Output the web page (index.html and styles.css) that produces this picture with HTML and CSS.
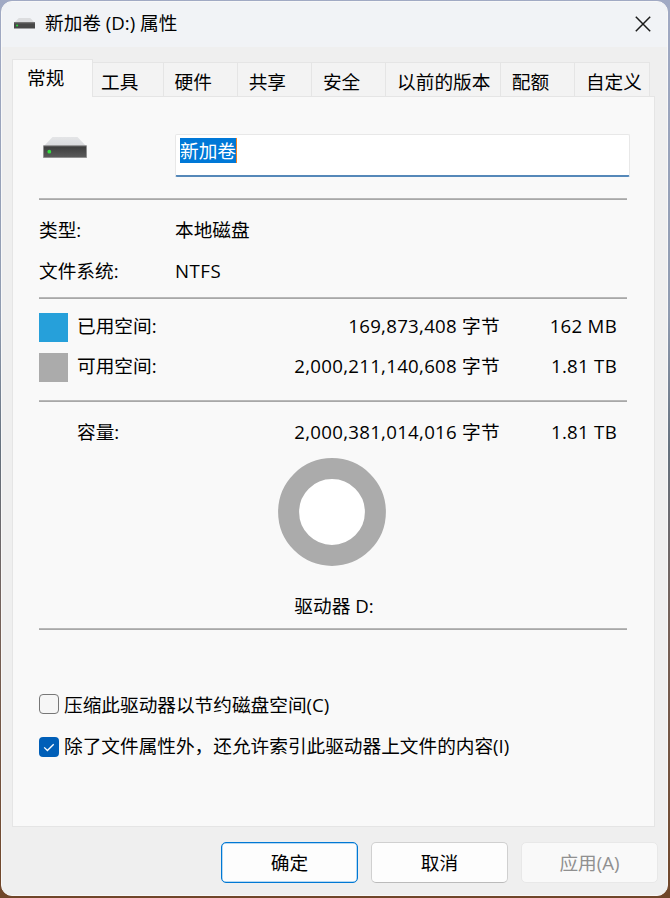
FILE: index.html
```
<!DOCTYPE html>
<html lang="zh-CN">
<head>
<meta charset="utf-8">
<title>新加卷 (D:) 属性</title>
<link rel="stylesheet" href="styles.css">
</head>
<body>
<main class="window">
  <header class="titlebar">
    <svg class="title-icon" viewBox="0 0 44 22" preserveAspectRatio="none"><path d="M10 0h24l9 9H1z" fill="#dcdddf"/><path d="M0 8.5h44V21H0z" fill="#484848"/><path d="M0 8.5h44v2H0z" fill="#777"/><circle cx="6.5" cy="15" r="2.2" fill="#28d83c"/></svg>
    <h1 class="title">新加卷 (D:) 属性</h1>
    <svg class="close" viewBox="0 0 16 16"><path d="M.8.8l14.4 14.4M15.2.8L.8 15.2" stroke="#1b1b1b" stroke-width="1.5" fill="none"/></svg>
  </header>
  <nav class="tabs">
    <div class="tab tab-active">常规</div>
    <div class="tab tab-w70">工具</div>
    <div class="tab">硬件</div>
    <div class="tab">共享</div>
    <div class="tab">安全</div>
    <div class="tab tab-wide">以前的版本</div>
    <div class="tab">配额</div>
    <div class="tab tab-last">自定义</div>
  </nav>
  <section class="panel">
    <div class="name-row">
      <svg class="drive" viewBox="0 0 44 22">
        <defs>
          <linearGradient id="front" x2="0" y2="1"><stop stop-color="#3b3b3b"/><stop offset="1" stop-color="#5c5c5c"/></linearGradient>
          <linearGradient id="lid" x2="0" y2="1"><stop stop-color="#e4e5e7"/><stop offset="1" stop-color="#d9dadd"/></linearGradient>
        </defs>
        <path d="M9.5 0h25l8.5 9H1z" fill="url(#lid)"/>
        <path d="M.5 8.8h43v11.7H.5z" fill="url(#front)" stroke="#919191"/>
        <circle cx="6.3" cy="14.7" r="1.9" fill="#35df42"/>
      </svg>
      <div class="name-field"><span class="selection">新加卷</span></div>
    </div>
    <hr>
    <dl class="info">
      <dt>类型:</dt><dd>本地磁盘</dd>
      <dt>文件系统:</dt><dd class="fs">NTFS</dd>
    </dl>
    <hr>
    <div class="usage">
      <i class="swatch used"></i><span class="label">已用空间:</span><span class="num">169,873,408 字节</span><span class="num">162 MB</span>
      <i class="swatch free"></i><span class="label">可用空间:</span><span class="num">2,000,211,140,608 字节</span><span class="num">1.81 TB</span>
    </div>
    <hr>
    <div class="usage capacity">
      <i></i><span class="label">容量:</span><span class="num">2,000,381,014,016 字节</span><span class="num">1.81 TB</span>
    </div>
    <div class="chart">
      <svg class="donut" viewBox="0 0 108 108"><circle cx="54" cy="54" r="43.4" fill="#fff" stroke="#ababab" stroke-width="21"/></svg>
      <span class="drive-name">驱动器 D:</span>
    </div>
    <hr>
    <div class="options">
      <div class="option"><span class="check"></span><span>压缩此驱动器以节约磁盘空间(C)</span></div>
      <div class="option"><span class="check checked"><svg viewBox="0 0 20 20"><path d="M5.2 10.4l3.2 3.1 6.3-6.3" fill="none" stroke="#fff" stroke-width="1.3"/></svg></span><span>除了文件属性外，还允许索引此驱动器上文件的内容(I)</span></div>
    </div>
  </section>
  <footer class="actions">
    <button class="btn primary">确定</button>
    <button class="btn">取消</button>
    <button class="btn" disabled>应用(A)</button>
  </footer>
</main>
</body>
</html>
```

FILE: styles.css
```
* { box-sizing: border-box; }
html, body { margin: 0; height: 898px; overflow: hidden; }
body {
  padding: 1px 2px 2px 1px;
  background: linear-gradient(#a1aac4, #8f9bb0 35%, #65717e 50%, #756057 70%, #704629);
  font: 18.67px/26px "Open Sans", "Noto Sans CJK SC", sans-serif;
  color: #000;
}
svg { display: block; }
.window {
  display: flex;
  flex-direction: column;
  height: 895px;
  border: 1px solid #f8f8f8;
  border-radius: 11px;
  background: #efefef;
  overflow: hidden;
}
.titlebar {
  display: flex;
  align-items: center;
  flex: none;
  height: 45px;
  padding: 0 16px 3px 12px;
  background: #f1f3f6;
}
.title-icon { width: 21px; height: 11px; margin-top: 1px; }
.title { flex: 1; margin: -1px 0 0 10px; font-size: 18.67px; font-weight: 400; }
.close { width: 16px; height: 16px; margin-top: 1px; }
.tabs { display: flex; align-items: flex-end; flex: none; height: 49px; padding-left: 10px; z-index: 1; }
.tab {
  width: 74.2px;
  height: 34px;
  padding: 6px 0 0 11px;
  border: 1px solid #e5e5e5;
  border-width: 1px 1px 0 0;
  background: #f3f3f3;
  white-space: nowrap;
}
.tab-active { width: 81px; height: 38px; margin-bottom: -1px; padding: 5px 0 0 14px; border-left-width: 1px; background: #f9f9f9; }
.tab-w70 { width: 70.5px; padding-left: 8px; }
.tab-wide { width: 114.7px; }
.tab-last { width: 75px; }
.panel { flex: none; width: 643px; height: 731px; margin-left: 10px; padding: 0 27px 0 26px; border: 1px solid #e5e5e5; background: #f9f9f9; }
hr { width: 588px; height: 2px; margin: 0; border: 0; background: linear-gradient(#b8b8b8 50%, #a8a8a8 50%); }
.name-row { display: flex; width: 592px; height: 101px; padding-top: 37px; }
.drive { width: 44px; height: 22px; margin: 3px 88px 0 4px; }
.name-field { width: 455px; height: 43px; padding: 3px 4px; border: 1px solid #e8e8e8; border-bottom: 2px solid #5588b9; border-radius: 2px; background: #fff; }
.selection { display: block; width: 57px; height: 25px; line-height: 25px; background: #0078d7; color: #fff; border-right: 1px solid #f58220; white-space: nowrap; }
.info { display: grid; grid-template: 41px 41px / 136px 1fr; height: 97px; margin: 0; padding-top: 9px; align-items: center; }
dd { margin: 0; }
.fs { letter-spacing: .5px; }
.usage { display: grid; grid-template: 39.5px 39.5px / 29px 130px 302px 117px; height: 101px; padding-top: 9px; align-items: center; }
.swatch { width: 29px; height: 29px; }
.used { background: #26a0da; }
.free { background: #ababab; }
.label { padding-left: 9px; margin-top: -3px; }
.num { text-align: right; letter-spacing: .28px; margin-top: -3px; }
.capacity { grid-template-rows: 42px; height: 56px; padding-top: 10px; }
.chart { display: flex; flex-direction: column; align-items: center; width: 588px; height: 170px; }
.donut { width: 108px; height: 108px; margin: 0 2px 0 0; }
.drive-name { margin-top: 27px; margin-left: 2px; }
.options { padding-top: 54px; }
.option { display: flex; align-items: center; gap: 5px; height: 42px; }
.option:first-child { height: 41px; }
.check { width: 20px; height: 20px; margin-top: -1px; border: 1px solid #777; border-radius: 4px; background: #f6f6f6; }
.checked { margin-top: 2px; border: 0; background: #005fb8; }
.actions { display: flex; gap: 13px; margin-top: 15px; margin-left: 219px; }
.btn { width: 137px; height: 41px; padding: 0; border: 1px solid #d0d0d0; border-bottom-color: #bbb; border-radius: 5px; background: #fdfdfd; color: #000; font: inherit; }
.btn.primary { border-color: #0078d4; box-shadow: inset 0 0 0 .5px #70b4e8; }
.btn:disabled { border-color: #e8e8e8; background: #f9f9f9; color: #909090; }
```
